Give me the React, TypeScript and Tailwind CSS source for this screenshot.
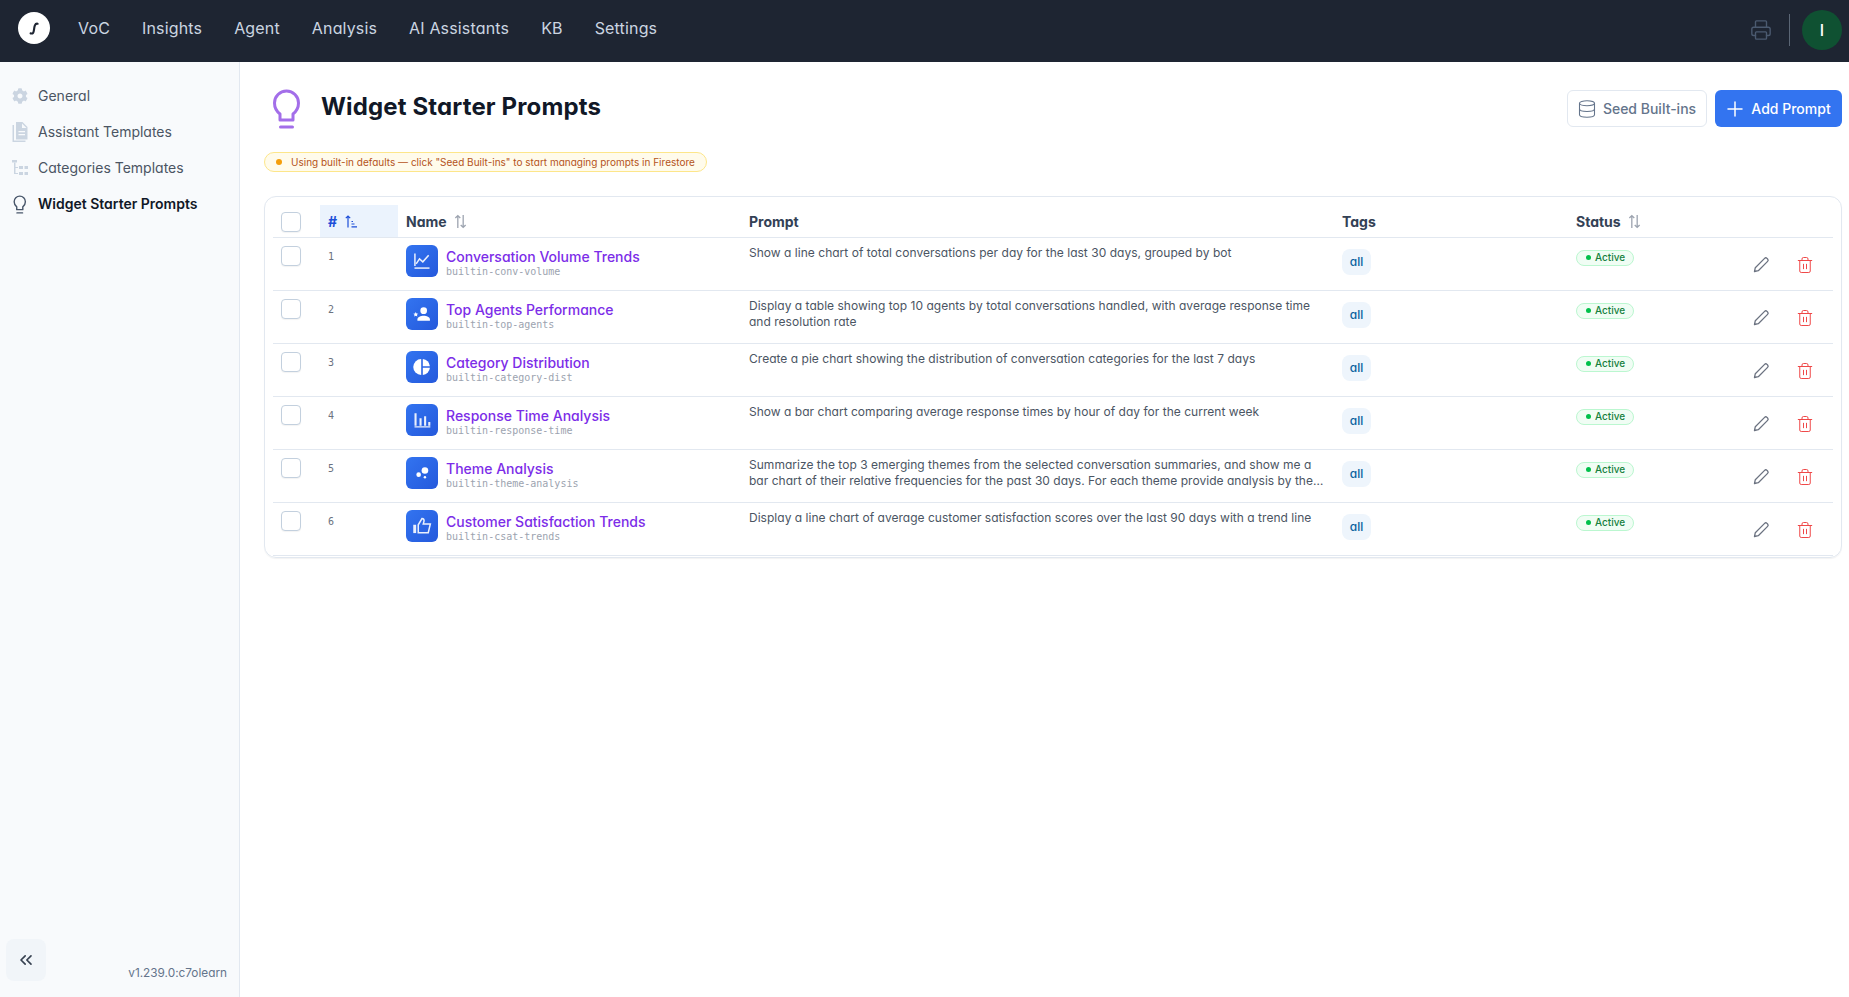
import React from 'react';
import { ChevronsLeft, Database, Plus, Printer, Trash2 } from 'lucide-react';
import { FaCog } from 'react-icons/fa';

const navItems = ['VoC', 'Insights', 'Agent', 'Analysis', 'AI Assistants', 'KB', 'Settings'];

const BulbIcon: React.FC<{ className: string; strokeWidth?: number }> = ({ className, strokeWidth = 3 }) => (
  <svg viewBox="0 0 30 40" className={className} fill="none" stroke="currentColor" strokeWidth={strokeWidth} strokeLinecap="round" strokeLinejoin="round">
    <path d="M8 31v-6C4.800 22.500 2.500 18.500 2.500 14a12 12 0 0 1 24 0c0 4.500-2.300 8.500-5.500 11v6z" />
    <path d="M8.500 38h12" />
  </svg>
);

const DocIcon = () => (
  <svg viewBox="0 0 16 20" className="w-4 h-5 fill-[#cbd5e1]">
    <path d="M4 0h6.500L15.500 5v12.500H4zM10 1.500V6h4.500zM6.500 9v1.200H13V9zm0 3v1.200H13V12z" fillRule="evenodd" />
    <path d="M.5 3H2v15.500h11.500V20H.5z" />
  </svg>
);

const TreeIcon = () => (
  <svg viewBox="0 0 16 16" className="w-4 h-4 fill-[#cbd5e1]">
    <path d="M0 0h5v2.500H0zM7 6h4v3H7zM12.500 6H16v3h-3.500zM7 12h4v3H7zM12.500 12H16v3h-3.500z" />
    <path d="M2 2.500h1.500V7H6v1H3.500v5H6v1H2z" />
  </svg>
);

const SortIcon: React.FC<{ className: string }> = ({ className }) => (
  <svg viewBox="0 0 12 14" className={className} fill="none" stroke="currentColor" strokeWidth="1.200">
    <path d="M3.500 13V1.500M1.200 3.800l2.300-2.300 2.300 2.300" />
    <path d="M8.500 1v11.500M6.200 10.200l2.300 2.300 2.300-2.300" />
  </svg>
);

const SortAscIcon = () => (
  <svg viewBox="0 0 12 13" className="w-3 h-[13px] text-[#1d4ed8]" fill="none" stroke="currentColor" strokeWidth="1.200">
    <path d="M3 12.500V1M.8 3.200L3 1l2.200 2.200" />
    <path d="M6.500 6.500h1.500M6.500 9h3M6.500 11.800H12" />
  </svg>
);

const PencilIcon = () => (
  <svg viewBox="0 0 18 18" className="w-[18px] h-[18px] text-[#6b7280]" fill="none" stroke="currentColor" strokeWidth="1.300" strokeLinejoin="round">
    <path d="M2.500 15.500l.8-3.800L12.600 2.400a1.700 1.700 0 0 1 2.400 0l.6.600a1.700 1.700 0 0 1 0 2.400L6.300 14.700z" />
  </svg>
);

const rowIcons = [
  <svg viewBox="0 0 24 24" className="w-5 h-5 text-white/90" fill="none" stroke="currentColor" strokeWidth="1.800">
    <path d="M3.500 3v15" />
    <path d="M3 20.500h18" />
    <path d="M5 15.500l4-6 4 3.500 7-8" />
  </svg>,
  <svg viewBox="0 0 24 24" className="w-5 h-5 fill-white">
    <circle cx="14" cy="8" r="4" />
    <path d="M6.500 20v-1.500c0-3 4-4.500 7.500-4.500s7.500 1.500 7.500 4.500V20z" />
    <path d="M4.500 9.500l.9 1.900 2.100.2-1.600 1.400.5 2-1.900-1-1.900 1 .5-2-1.600-1.400 2.100-.2z" />
  </svg>,
  <svg viewBox="0 0 24 24" className="w-5 h-5 fill-white">
    <path d="M11 2.500v19a9.500 9.500 0 0 1 0-19z" />
    <path d="M13 2.500a9.500 9.500 0 0 1 8.500 8.500H13z" />
    <path d="M13 13h8.500a9.500 9.500 0 0 1-8.500 8.500z" />
  </svg>,
  <svg viewBox="0 0 24 24" className="w-5 h-5 fill-white/90">
    <path d="M3 4h2.500v15H3zM9 10h2.500v9H9zM14.500 7.500h2.500V19h-2.500zM19.500 14.500H22V19h-2.500zM3 19.500h19V21H3z" />
  </svg>,
  <svg viewBox="0 0 24 24" className="w-5 h-5 fill-white">
    <circle cx="15.500" cy="9" r="4" />
    <circle cx="8" cy="14" r="2.800" />
    <circle cx="15.500" cy="17" r="1.500" />
  </svg>,
  <svg viewBox="0 0 24 24" className="w-5 h-5 text-white/90" fill="none" stroke="currentColor" strokeWidth="1.800">
    <path d="M1.500 10.500h3.500v10H1.500z" fill="currentColor" stroke="none" />
    <path d="M7.500 20V10.500L12 3c1.800 0 2.500 1.200 2.500 2.800L13.500 9.500H22l-2.500 10.500z" />
  </svg>
];

const prompts = [
  {
    name: 'Conversation Volume Trends',
    id: 'builtin-conv-volume',
    text: 'Show a line chart of total conversations per day for the last 30 days, grouped by bot'
  },
  {
    name: 'Top Agents Performance',
    id: 'builtin-top-agents',
    text: 'Display a table showing top 10 agents by total conversations handled, with average response time and resolution rate'
  },
  {
    name: 'Category Distribution',
    id: 'builtin-category-dist',
    text: 'Create a pie chart showing the distribution of conversation categories for the last 7 days'
  },
  {
    name: 'Response Time Analysis',
    id: 'builtin-response-time',
    text: 'Show a bar chart comparing average response times by hour of day for the current week'
  },
  {
    name: 'Theme Analysis',
    id: 'builtin-theme-analysis',
    text: 'Summarize the top 3 emerging themes from the selected conversation summaries, and show me a bar chart of their relative frequencies for the past 30 days. For each theme provide analysis by the top categories and the sentiment'
  },
  {
    name: 'Customer Satisfaction Trends',
    id: 'builtin-csat-trends',
    text: 'Display a line chart of average customer satisfaction scores over the last 90 days with a trend line'
  }
];

const Checkbox = () => (
  <div className="w-5 h-5 rounded-[4px] border border-[#c3d0de] bg-white shadow-[0_1px_1px_rgba(0,0,0,0.05)]" />
);

const App: React.FC = () => {
  return (
    <div className="h-[997px] w-[1849px] flex flex-col overflow-hidden bg-white font-['Inter',sans-serif] [font-feature-settings:'cv11']">
      <header className="h-[62px] shrink-0 bg-[#1e2532] flex items-center pl-[18px] pr-[7px] pb-[2px]">
        <div className="w-8 h-8 mb-1 rounded-full bg-white flex items-center justify-center">
          <svg viewBox="0 0 16 16" className="w-[18px] h-[18px]" fill="none" stroke="#1e2532" strokeWidth="1.900" strokeLinecap="round">
            <path d="M5 12.800c2.200.5 2.700-.9 3-3.300.3-2.400.7-5.800 3.200-5.300" />
          </svg>
        </div>
        <nav className="flex items-center gap-8 ml-[28px] mb-1 text-base tracking-[0.01em] text-[#cbd5e1]">
          {navItems.map((item) => (
            <span key={item}>{item}</span>
          ))}
        </nav>
        <div className="ml-auto flex items-center">
          <Printer className="w-[22px] h-[22px] text-[#4b5a70]" strokeWidth={1.500} />
          <div className="w-px h-8 bg-[#5b6675] ml-[17px] mr-3" />
          <div className="w-10 h-10 rounded-full bg-[#0f5132] text-white flex items-center justify-center text-base font-medium">I</div>
        </div>
      </header>

      <div className="flex flex-1 min-h-0">
        <aside className="w-[240px] shrink-0 bg-[#f8fafc] border-r border-[#e2e8f0] flex flex-col">
          <div className="pt-4 pl-3 flex flex-col text-sm text-[#4b5563]">
            <div className="h-9 flex items-center gap-2.5">
              <FaCog className="w-4 h-4 text-[#cbd5e1]" />
              General
            </div>
            <div className="h-9 flex items-center gap-2.5"><DocIcon />Assistant Templates</div>
            <div className="h-9 flex items-center gap-2.5"><TreeIcon />Categories Templates</div>
            <div className="h-9 flex items-center gap-2.5 font-semibold text-[#111827]">
              <span className="w-4 flex justify-center">
                <BulbIcon className="w-[14px] h-[19px] shrink-0 text-[#475569]" />
              </span>
              Widget Starter Prompts
            </div>
          </div>
          <div className="mt-auto flex items-end justify-between pl-1.5 pr-3 pb-4">
            <div className="w-10 h-[42px] rounded-lg bg-[#f1f5f9] flex items-center justify-center text-[#374151]">
              <ChevronsLeft className="w-5 h-5" strokeWidth={2} />
            </div>
            <span className="text-[11.800px] -mb-0.5 text-[#64748b]">v1.239.0:c7olearn</span>
          </div>
        </aside>

        <main className="flex-1 min-w-0 pl-6 pr-[7px] pt-7">
          <div className="flex items-start justify-between">
            <div className="flex items-center gap-[19px] h-10 pl-2 -mt-px">
              <BulbIcon className="w-[30px] h-10 text-[#a36ee9]" />
              <h1 className="text-2xl font-bold tracking-[0.006em] mb-1 text-[#111827]">Widget Starter Prompts</h1>
            </div>
            <div className="flex items-center gap-2">
              <button className="h-[37px] w-[140px] rounded-md border border-[#e2e8f0] bg-white flex items-center justify-center gap-1.5 pr-px text-sm font-medium text-[#64748b]">
                <Database className="w-5 h-5" strokeWidth={1.300} />
                Seed Built-ins
              </button>
              <button className="h-[37px] w-[127px] rounded-md bg-[#3374f0] flex items-center justify-center gap-1 pr-[3px] text-sm font-medium text-white">
                <Plus className="w-6 h-6" strokeWidth={1.500} />
                Add Prompt
              </button>
            </div>
          </div>

          <div className="mt-[23px] flex items-center h-5 w-[443px] rounded-full border border-[#fde68a] bg-[#fffbeb] pl-[11px] gap-[9px] text-[10px] whitespace-nowrap text-[#b4531a]">
            <span className="w-1.5 h-1.5 rounded-full bg-[#f59e0b]" />
            Using built-in defaults — click "Seed Built-ins" to start managing prompts in Firestore
          </div>

          <div className="mt-6 rounded-xl border border-[#e2e8f0] pt-2 px-2 pb-px shadow-[0_1px_1px_rgba(0,0,0,0.05)]">
            <table className="w-full table-fixed border-collapse">
              <colgroup>
                <col className="w-[47px]" />
                <col className="w-[78px]" />
                <col className="w-[343px]" />
                <col className="w-[593px]" />
                <col className="w-[234px]" />
                <col className="w-[165px]" />
                <col />
              </colgroup>
              <thead>
                <tr className="h-[32px] border-b border-[#e2e8f0] text-left text-sm font-semibold text-[#334155] [&>th]:pt-0.5">
                  <th className="pl-2"><Checkbox /></th>
                  <th className="pl-2 bg-[#ebf3fd] text-[#1d4ed8]">
                    <span className="flex items-center gap-2">
                      #
                      <SortAscIcon />
                    </span>
                  </th>
                  <th className="pl-2">
                    <span className="flex items-center gap-[7px]">
                      Name
                      <SortIcon className="w-[13px] h-[15px] text-[#9ca3af]" />
                    </span>
                  </th>
                  <th className="pl-2">Prompt</th>
                  <th className="pl-2">Tags</th>
                  <th className="pl-2">
                    <span className="flex items-center gap-[7px]">
                      Status
                      <SortIcon className="w-[13px] h-[15px] text-[#9ca3af]" />
                    </span>
                  </th>
                  <th />
                </tr>
              </thead>
              <tbody>
                {prompts.map((prompt, i) => (
                  <tr key={prompt.id} className="h-[53px] border-b border-[#e2e8f0] align-top">
                    <td className="pl-2 pt-2"><Checkbox /></td>
                    <td className="pl-2 pt-[11px] font-['DejaVu_Sans_Mono',monospace] text-[10px] leading-4 text-[#6b7280]">{i + 1}</td>
                    <td className="pl-2 pt-[7px]">
                      <div className="flex items-start gap-2">
                        <div className="w-8 h-8 rounded-md bg-gradient-to-br from-[#3374f0] to-[#2559dc] flex items-center justify-center shrink-0">
                          {rowIcons[i]}
                        </div>
                        <div className="min-w-0 pt-[3px]">
                          <div className="text-sm font-medium leading-[18px] text-[#7c2de8]">{prompt.name}</div>
                          <div className="font-['DejaVu_Sans_Mono',monospace] text-[10px] leading-[12px] text-[#9ca3af]">{prompt.id}</div>
                        </div>
                      </div>
                    </td>
                    <td className="pl-2 pr-2 pt-[7px]">
                      <p className="text-xs tracking-[0.002em] leading-4 text-[#4b5563] line-clamp-2">{prompt.text}</p>
                    </td>
                    <td className="pl-2 pt-[11px]">
                      <span className="flex w-fit items-center justify-center px-1.5 min-w-[29px] h-[26px] rounded-lg bg-[#eef5fc] text-xs font-medium text-[#0b629f]">all</span>
                    </td>
                    <td className="pl-2 pt-3">
                      <span className="flex items-center gap-1 h-4 w-[58px] pl-[9px] rounded-full border border-[#bbf7d0] bg-[#f0fdf4] text-[10px] font-medium text-[#15803d]">
                        <span className="w-[5px] h-[5px] rounded-full bg-[#00c04b]" />
                        Active
                      </span>
                    </td>
                    <td className="pt-[18px]">
                      <div className="flex items-center justify-end gap-[26px] pr-[19px]">
                        <PencilIcon />
                        <Trash2 className="w-[18px] h-[18px] text-[#ef4444]" strokeWidth={1.300} />
                      </div>
                    </td>
                  </tr>
                ))}
              </tbody>
            </table>
          </div>
        </main>
      </div>
    </div>
  );
};

export default App;
